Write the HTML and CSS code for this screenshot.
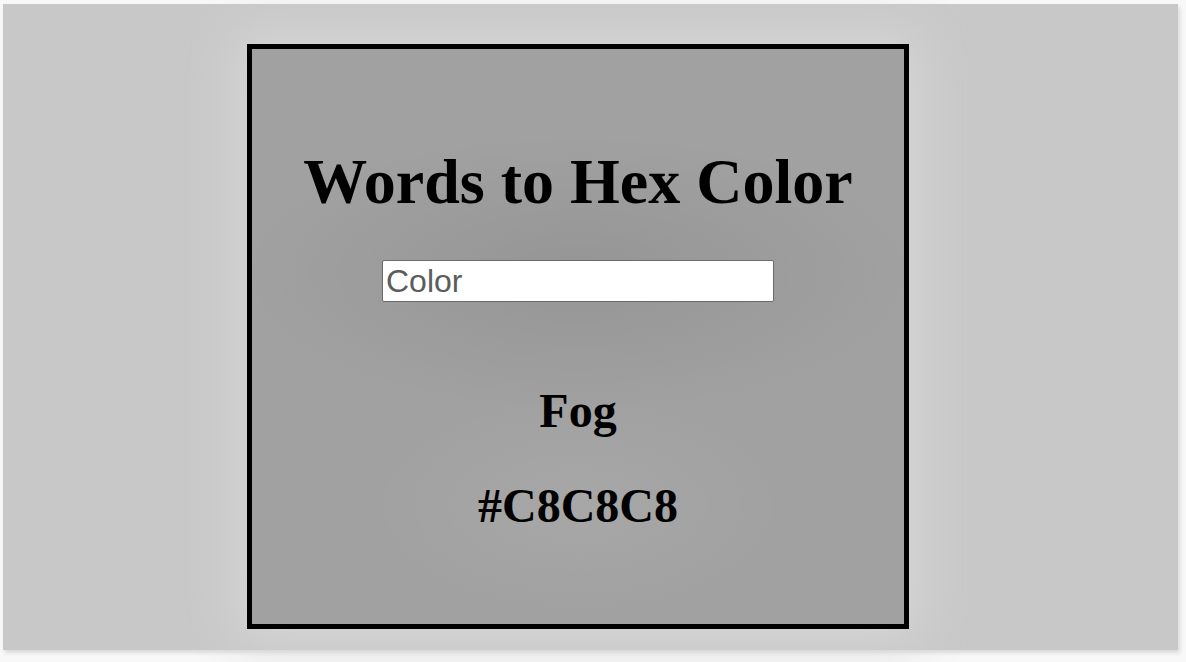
FILE: index.html
```html
<!DOCTYPE html>
<html lang="en">
<head>
<meta charset="utf-8">
<title>Words to Hex Color</title>
<link rel="stylesheet" href="styles.css">
</head>
<body>
<div class="frame">
  <div class="card">
    <h1 class="title">Words to Hex Color</h1>
    <input class="color-input" type="text" placeholder="Color">
    <h2 class="name">Fog</h2>
    <h2 class="hex">#C8C8C8</h2>
  </div>
</div>
</body>
</html>
```

FILE: styles.css
```css
html, body {
  margin: 0;
  padding: 0;
  background: #f8f8f8;
}

body {
  width: 1186px;
  height: 662px;
  overflow: hidden;
  font-family: "Liberation Serif", "Times New Roman", serif;
}

.frame {
  box-sizing: border-box;
  margin: 4px 0 0 3px;
  width: 1175px;
  height: 646px;
  padding: 40px 0 0 244px;
  background: #c8c8c8;
  box-shadow: 2px 3px 4px rgba(0, 0, 0, 0.12);
}

.card {
  box-sizing: border-box;
  width: 662px;
  height: 585px;
  border: 5px solid #000;
  background:
    radial-gradient(ellipse 210px 110px at 326px 456px, rgba(255, 255, 255, 0.07), rgba(255, 255, 255, 0)),
    radial-gradient(ellipse 340px 140px at 326px 224px, rgba(0, 0, 0, 0.075), rgba(0, 0, 0, 0)),
    #a1a1a1;
  box-shadow: 0 0 50px 12px #d6d6d6;
  display: flex;
  flex-direction: column;
  align-items: center;
}

.title {
  margin: 96px 0 0;
  font-size: 64px;
  line-height: 74px;
  font-weight: bold;
  color: #000;
}

.color-input {
  box-sizing: border-box;
  margin-top: 41px;
  width: 392px;
  height: 42px;
  padding: 0 3px;
  border: 1px solid #6a6a6a;
  border-radius: 2px;
  background: #fff;
  font-family: "Liberation Sans", Arial, sans-serif;
  font-size: 32px;
  color: #000;
  outline: none;
}

.color-input::placeholder {
  color: #5c5c5c;
}

.name {
  margin: 81px 0 0;
  font-size: 48px;
  line-height: 55px;
  font-weight: bold;
}

.hex {
  margin: 40px 0 0;
  font-size: 48px;
  line-height: 55px;
  font-weight: bold;
}
```
